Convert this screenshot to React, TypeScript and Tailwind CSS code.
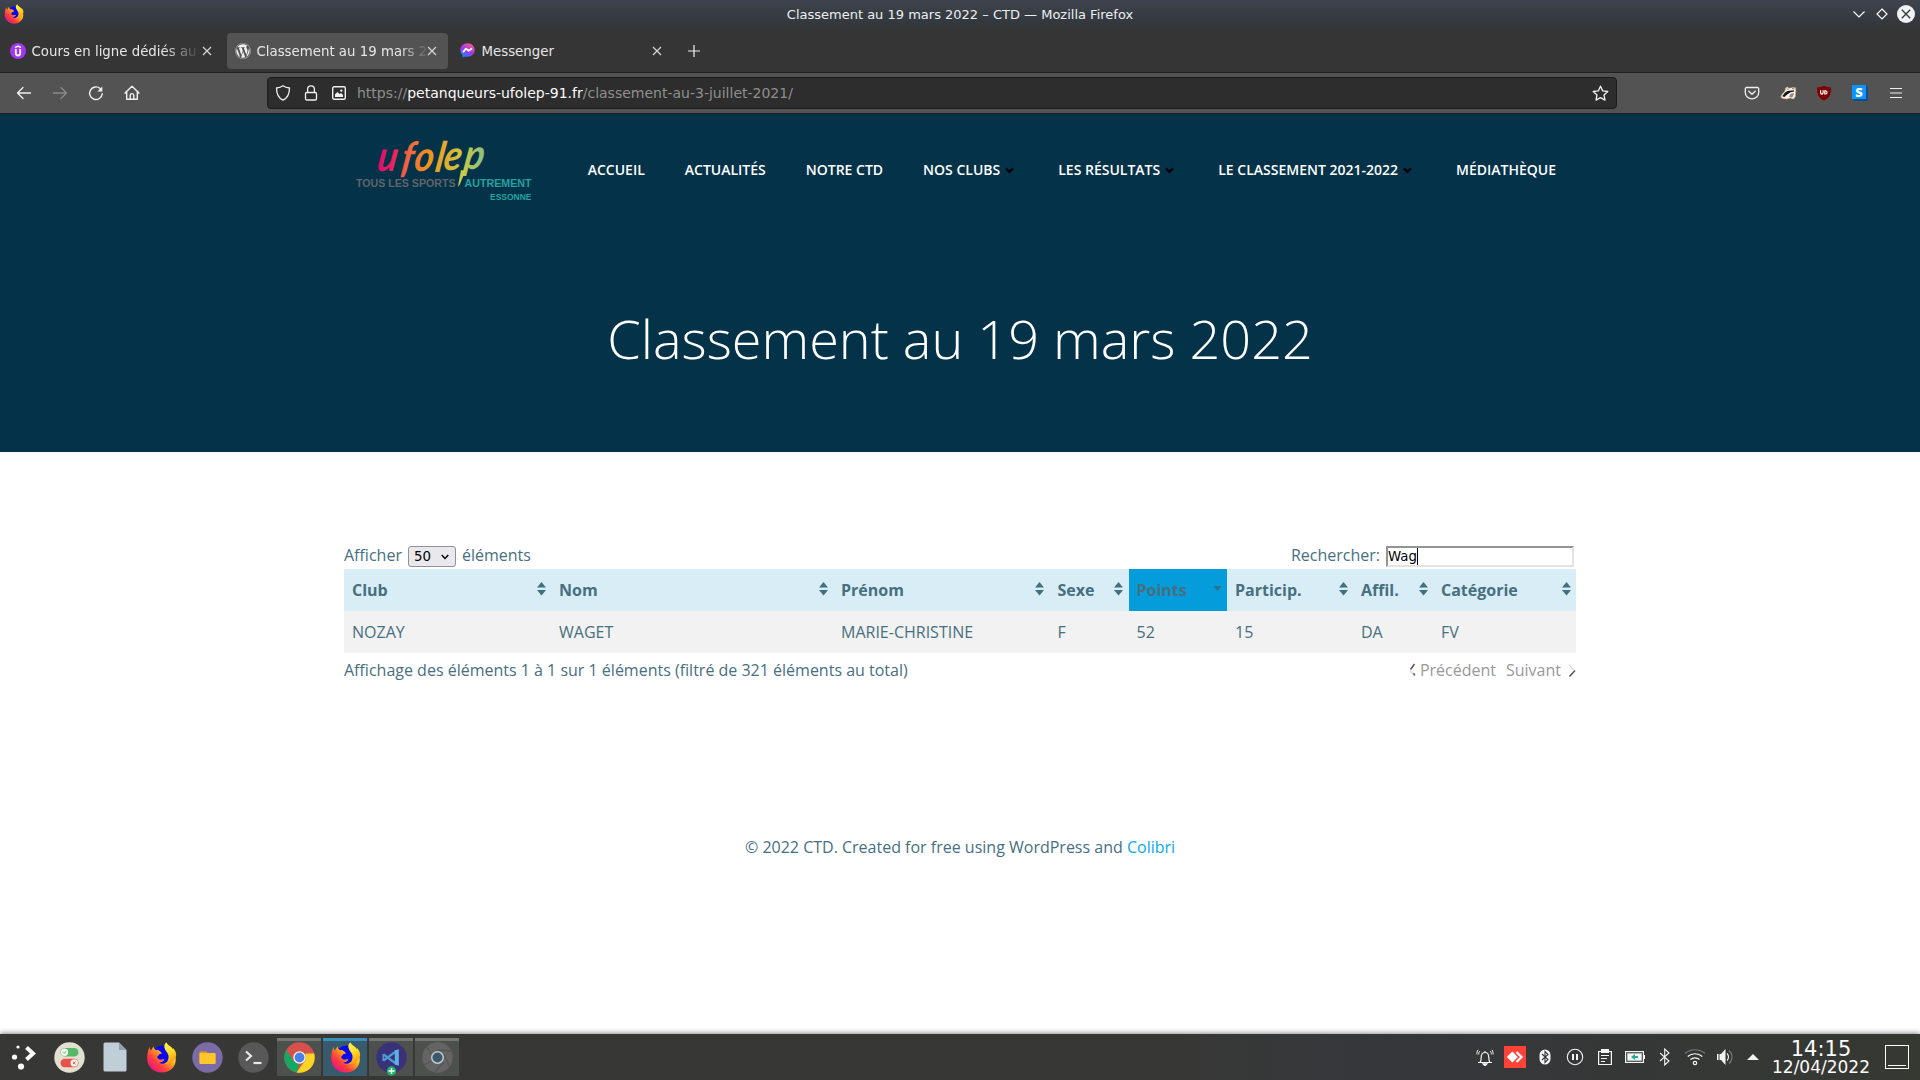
import React from "react";
import { FaWordpress } from "react-icons/fa";

function Firefox({ size, id }: { size: number; id: string }) {
  return (
    <svg width={size} height={size} viewBox="0 0 30 31" className="shrink-0">
      <defs>
        <linearGradient id={id + "a"} x1="0.85" y1="0.1" x2="0.1" y2="0.85">
          <stop offset="0.1" stopColor="#fff04a" />
          <stop offset="0.4" stopColor="#ff9a1f" />
          <stop offset="0.7" stopColor="#ff3b3f" />
          <stop offset="1" stopColor="#e3158a" />
        </linearGradient>
        <linearGradient id={id + "b"} x1="0" y1="0" x2="0.3" y2="1">
          <stop offset="0" stopColor="#fff44f" />
          <stop offset="0.5" stopColor="#ffe226" />
          <stop offset="1" stopColor="#ff9d0e" />
        </linearGradient>
      </defs>
      <circle cx="16" cy="14" r="10.5" fill="#0a08ee" />
      <path
        d="M3.2 4.5C3.2 7 3.6 7.6 4.4 8.6L7 4.2c.2 2 1.300 2.900 2.600 4 2.800-.6 5 1.600 5.800 3.400l-2 .3c-1 .2-1.200 1.600-2.400 2.200-.9 2 .6 3 2.200 3.300 2 .3 3-.8 4.800.2-.8 2.200-3.400 3-5.400 2.900 3.400 2.600 8.400.6 10-2.900 1.400-3.400.8-6-.8-8.600 3 .6 7 3 7.400 7.200C30 24.500 23.500 30.500 15.300 30.500 7 30.500.6 24.300.6 16.200.6 11.500 1.800 7.400 3.200 4.500z"
        fill={"url(#" + id + "a)"}
      />
      <path
        d="M20 .3c-2.600 2-2.600 4.500-1.400 7.300 1.400 2.800 4 4.400 3.400 8.400-.4 3-2 5-4 6 5.500.6 11.500-3.500 11.700-9.500C29.300 9.500 27.800 7 26.300 6l.2 1.600C25 4 20.800 3.500 20 .3z"
        fill={"url(#" + id + "b)"}
      />
    </svg>
  );
}

function Close() {
  return (
    <svg width="10" height="10" viewBox="0 0 10 10" fill="none" stroke="#d6d6d6" strokeWidth="1.2" className="shrink-0">
      <path d="M1 1l8 8M9 1l-8 8" />
    </svg>
  );
}

function TitleBar() {
  return (
    <div className="grid h-[28px] grid-cols-[1fr_auto_1fr] items-center bg-linear-to-b from-[#3f444e] to-[#30363a]">
      <div className="pl-[4px]">
        <Firefox size={20} id="ft" />
      </div>
      <div className="text-[13px] leading-none text-[#eceff0]">Classement au 19 mars 2022 – CTD — Mozilla Firefox</div>
      <div className="flex items-center justify-end gap-[9px] pr-[5px]">
        <svg width="14" height="14" viewBox="0 0 14 14" fill="none" stroke="#fcfcfc" strokeWidth="1.2">
          <path d="M1.500 4.500L7 10l5.500-5.500" />
        </svg>
        <svg width="14" height="14" viewBox="0 0 14 14" fill="none" stroke="#fcfcfc" strokeWidth="1.2" className="-mr-[1px]">
          <path d="M7 2l5 5-5 5-5-5z" />
        </svg>
        <svg width="18" height="18" viewBox="0 0 18 18">
          <circle cx="9" cy="9" r="9" fill="#f1f2f3" />
          <path d="M4.800 4.800l8.400 8.400M13.200 4.800l-8.400 8.400" stroke="#31363b" strokeWidth="1.300" />
        </svg>
      </div>
    </div>
  );
}

function TabBar() {
  return (
    <div className="flex h-[45px] items-center border-b border-[#202020] bg-[#353535] pt-[1px] text-[13.333px] leading-[20px] text-[#e6e6e6]">
      <div className="flex h-[36px] w-[225px] items-center pl-[10px]">
        <svg width="16" height="16" viewBox="0 0 16 16" className="shrink-0">
          <circle cx="8" cy="8" r="8" fill="#a435f0" />
          <path d="M5 4.700L8 3l3 1.700" stroke="#fff" strokeWidth="1.500" fill="none" />
          <path d="M5.800 6v4.300a2.200 2.200 0 0 0 4.400 0V6" stroke="#fff" strokeWidth="1.800" fill="none" />
        </svg>
        <div className="ml-[5.500px] w-[165px] overflow-hidden pt-[2px] whitespace-nowrap [mask-image:linear-gradient(to_right,black_80%,transparent_102%)]">Cours en ligne dédiés au</div>
        <div className="ml-[5.500px]"><Close /></div>
      </div>
      <div className="ml-[2px] flex h-[36px] w-[221px] items-center rounded-[4px] bg-[#535353] pl-[8px]">
        <FaWordpress size={16} className="shrink-0 text-[#f0f0f0]" />
        <div className="ml-[5.500px] w-[169.500px] overflow-hidden pt-[2px] whitespace-nowrap [mask-image:linear-gradient(to_right,black_84%,transparent_102%)]">Classement au 19 mars 2022</div>
        <div className="ml-[1px]"><Close /></div>
      </div>
      <div className="flex h-[36px] w-[225px] items-center pl-[12px]">
        <svg width="15" height="15" viewBox="0 0 15 15" className="shrink-0">
          <defs>
            <linearGradient id="msg" x1="0.2" y1="1" x2="0.8" y2="0">
              <stop offset="0" stopColor="#0099ff" />
              <stop offset="0.45" stopColor="#a033ff" />
              <stop offset="1" stopColor="#ff5f70" />
            </linearGradient>
          </defs>
          <path d="M7.500.2C3.400.2.300 3.200.300 7.100c0 2.100.9 3.900 2.300 5.100v2.300l2.500-1.100c.8.2 1.600.3 2.400.3 4.100 0 7.200-2.900 7.200-6.700S11.600.2 7.500.2z" fill="url(#msg)" />
          <path d="M3 9.200l3-3.600 2.600 2.200L12 5.400" stroke="#fff" strokeWidth="1.800" fill="none" strokeLinejoin="round" />
        </svg>
        <div className="ml-[6.500px] w-[165.500px] pt-[2px]">Messenger</div>
        <div className="ml-[5px]"><Close /></div>
      </div>
      <svg width="12" height="12" viewBox="0 0 12 12" className="mt-[1px] ml-[15px]" stroke="#f0f0f0" strokeWidth="1.200">
        <path d="M6 0v12M0 6h12" />
      </svg>
    </div>
  );
}

function ToolBar() {
  return (
    <div className="flex h-[41px] items-center border-b border-[#202020] bg-[#535353]">
      <div className="flex w-[267px] shrink-0 items-center gap-[20px] pl-[16px]">
        <svg width="16" height="16" viewBox="0 0 16 16" fill="none" stroke="#f0f0f0" strokeWidth="1.300" strokeLinecap="round" strokeLinejoin="round">
          <path d="M14.500 8H1.500M7 2.500L1.500 8 7 13.500" />
        </svg>
        <svg width="16" height="16" viewBox="0 0 16 16" fill="none" stroke="#8b8b8b" strokeWidth="1.300" strokeLinecap="round" strokeLinejoin="round">
          <path d="M1.500 8h13M9 2.500L14.500 8 9 13.500" />
        </svg>
        <svg width="16" height="16" viewBox="0 0 16 16" fill="none" stroke="#f0f0f0" strokeWidth="1.400" strokeLinecap="round">
          <path d="M12.200 3.600A6.300 6.300 0 1 0 14.200 8.800" />
          <path d="M14.300 1.500v5H9.300z" fill="#f0f0f0" stroke="none" />
        </svg>
        <svg width="16" height="16" viewBox="0 0 16 16" fill="none" stroke="#f0f0f0" strokeWidth="1.400" strokeLinecap="round" strokeLinejoin="round" className="-ml-[0.500px]">
          <path d="M1 8L8 1.200 15 8M2.700 6.600V14.300H13.300V6.600" />
          <path d="M6.200 14v-3.600a1.800 1.800 0 0 1 3.600 0V14" />
        </svg>
      </div>
      <div className="flex h-[32px] w-[1350px] shrink-0 items-center rounded-[4px] border border-[#1b1b1b] bg-[#2d2d2d] pl-[7px] text-[14px] text-[#8f8f8f]">
        <svg width="16" height="16" viewBox="0 0 16 16" fill="none" stroke="#f0f0f0" strokeWidth="1.300" strokeLinejoin="round">
          <path d="M8 .8c2 1.500 4.300 2 6.500 2.200 0 5.500-1.800 10-6.500 12.200C3.300 13 1.500 8.500 1.500 3 3.700 2.800 6 2.300 8 .8z" />
        </svg>
        <svg width="14" height="16" viewBox="0 0 14 16" fill="none" stroke="#f0f0f0" strokeWidth="1.300" className="ml-[13px]">
          <rect x="1.500" y="7.500" width="11" height="7.500" rx="1.300" />
          <path d="M3.600 7.500V4.300a3.400 3.400 0 0 1 6.800 0v3.200" />
        </svg>
        <svg width="14" height="14" viewBox="0 0 14 14" className="ml-[14px]">
          <rect x=".7" y=".7" width="12.600" height="12.600" rx="1.500" fill="none" stroke="#f0f0f0" strokeWidth="1.400" />
          <path d="M3 11V8.300L5.500 6l2 2 1.500-1 2 2v2z" fill="#f0f0f0" />
          <circle cx="9.300" cy="4.600" r="1.200" fill="#f0f0f0" />
        </svg>
        <div className="ml-[11px] whitespace-nowrap">
          https://<span className="text-[#fbfbfb]">petanqueurs-ufolep-91.fr</span>/classement-au-3-juillet-2021/
        </div>
        <svg width="17" height="17" viewBox="0 0 17 17" fill="none" stroke="#f0f0f0" strokeWidth="1.300" strokeLinejoin="round" className="mr-[7px] ml-auto">
          <path d="M8.500 1.200l2.200 4.700 5.100.6-3.800 3.500 1 5.100-4.500-2.500L4 15.100l1-5.100L1.200 6.500l5.100-.6z" />
        </svg>
      </div>
      <div className="flex flex-1 items-center justify-end gap-[20px] pr-[16px]">
        <svg width="16" height="16" viewBox="0 0 16 16" fill="none" stroke="#f0f0f0" strokeWidth="1.300" strokeLinecap="round" strokeLinejoin="round">
          <path d="M2.500 2.500h11a1.200 1.200 0 0 1 1.200 1.200v4a6.700 6.200 0 0 1-13.400 0v-4a1.200 1.200 0 0 1 1.200-1.200z" />
          <path d="M4.800 6.300L8 9.300l3.200-3" />
        </svg>
        <svg width="17" height="16" viewBox="0 0 17 16" className="-mr-[1px]">
          <path d="M.8 12.200L1.500 10 5 6 5.500 3 7.500 2l1.500 1.200L13 2.500l2.500.3.300 3-.5 6-2 2.200-3-1-3.500 1-4-.5z" fill="#f6f2ec" stroke="#e79a5b" strokeWidth=".8" strokeDasharray="2.500 1" />
          <path d="M2.200 11.300L5 7.500l2.500-1.500 6.500-.8v1.300l-3.500.8L6.500 10l-2 2z" fill="#161616" />
          <path d="M9 11.500l2-3 3-.3-1 3.300-2 1z" fill="#8a8a8a" />
          <path d="M6.500 3.800l2 .7M12 3.500l2.500.3" stroke="#555" strokeWidth=".7" />
        </svg>
        <svg width="16" height="16" viewBox="0 0 16 16">
          <path d="M8 .8c2 1.300 4 1.700 7 1.700 0 6-.8 10.300-7 13C1.800 12.800 1 8.500 1 2.500 4 2.500 6 2.100 8 .8z" fill="#800000" />
          <path d="M4.600 5.300v2.500a1.200 1.200 0 0 0 2.500 0V5.300M8.800 5.900h1a1.600 1.600 0 0 1 0 3.100h-1z" fill="none" stroke="#fff" strokeWidth="1.200" />
        </svg>
        <div className="-mt-[2px] flex h-[14px] w-[14px] items-center justify-center bg-[#0a94ff] font-['Open_Sans',sans-serif] text-[13px] leading-none font-extrabold text-white shadow-[1px_1px_0_#0b4f8c,2px_2px_0_#0b4f8c]">S</div>
        <svg width="12" height="12" viewBox="0 0 12 12" stroke="#f0f0f0" strokeWidth="1.200" className="mr-[2px] ml-[4px]">
          <path d="M0 1.500h12M0 6h12M0 10.500h12" />
        </svg>
      </div>
    </div>
  );
}

function Logo() {
  return (
    <svg width="180" height="70" viewBox="0 0 180 70">
      <defs>
        <linearGradient id="ufo" gradientUnits="userSpaceOnUse" x1="26" y1="0" x2="148" y2="0">
          <stop offset="0" stopColor="#d9116b" />
          <stop offset="0.12" stopColor="#ea1f60" />
          <stop offset="0.28" stopColor="#f06d3c" />
          <stop offset="0.45" stopColor="#f3901f" />
          <stop offset="0.6" stopColor="#e2ab2b" />
          <stop offset="0.78" stopColor="#c8c845" />
          <stop offset="1" stopColor="#7dc08c" />
        </linearGradient>
      </defs>
      <text transform="translate(0 34) skewX(-9) scale(0.88 1)" x="24 51 66 90 99 122" y="0 1 0 1 -1 -2" fontFamily="Lato" fontStyle="italic" fontWeight="700" fontSize="42" fill="url(#ufo)">ufolep</text>
      <path d="M106 33L110.500 34 104.500 48 102.800 50z" fill="#c3cb4c" />
      <g fontFamily="Liberation Sans" fontWeight="700">
        <text x="1" y="50" fontSize="11.500" textLength="99.500" lengthAdjust="spacingAndGlyphs" fill="#626468">TOUS LES SPORTS</text>
        <text x="109.500" y="50" fontSize="11.500" textLength="67" lengthAdjust="spacingAndGlyphs" fill="#22a3a0">AUTREMENT</text>
        <text x="135" y="63" fontSize="9" textLength="41.500" lengthAdjust="spacingAndGlyphs" fill="#22a3a0">ESSONNE</text>
      </g>
    </svg>
  );
}

const nav = [
  { label: "ACCUEIL", menu: false },
  { label: "ACTUALITÉS", menu: false },
  { label: "NOTRE CTD", menu: false },
  { label: "NOS CLUBS", menu: true },
  { label: "LES RÉSULTATS", menu: true },
  { label: "LE CLASSEMENT 2021-2022", menu: true },
  { label: "MÉDIATHÈQUE", menu: false },
];

function Hero() {
  return (
    <header className="h-[338px] bg-[#033249] font-['Open_Sans',sans-serif] text-white">
      <div className="mx-auto flex h-[112px] w-[1232px] items-center justify-between pr-[20px] pl-[11px]">
        <div className="mt-[4px]"><Logo /></div>
        <nav className="flex gap-[40px] text-[14px] leading-none font-semibold whitespace-nowrap">
          {nav.map((n) => (
            <a key={n.label} className="flex items-center">
              {n.label}
              {n.menu && (
                <svg width="9" height="7" viewBox="0 0 9 7" className="mr-[4px] ml-[5px]" fill="none" stroke="#00060a" strokeWidth="2.400">
                  <path d="M1 1.300l3.500 3.500L8 1.300" />
                </svg>
              )}
            </a>
          ))}
        </nav>
      </div>
      <h1 className="mt-[76px] text-center text-[54px] leading-[72px] font-light">Classement au 19 mars 2022</h1>
    </header>
  );
}

const columns = [
  { head: "Club", value: "NOZAY" },
  { head: "Nom", value: "WAGET" },
  { head: "Prénom", value: "MARIE-CHRISTINE" },
  { head: "Sexe", value: "F" },
  { head: "Points", value: "52" },
  { head: "Particip.", value: "15" },
  { head: "Affil.", value: "DA" },
  { head: "Catégorie", value: "FV" },
];

function Sort({ active }: { active: boolean }) {
  return (
    <svg width="9" height="14" viewBox="0 0 9 14" fill={active ? "#2f6f8b" : "#3f7082"} className="mt-[-3px]">
      {!active && <path d="M4.500 0L9 5.500H0z" />}
      <path d={active ? "M4.500 9L8.500 4H.5z" : "M4.500 13.500L9 8H0z"} />
    </svg>
  );
}

function Content() {
  return (
    <main className="h-[582px] bg-white pt-[92px] font-['Open_Sans',sans-serif] text-[16px] leading-[24px] text-[#46707f]">
      <div className="mx-auto w-[1232px]">
        <div className="flex h-[25px] items-center justify-between pr-[2px]">
          <label className="flex items-center">
            <span className="-mt-[3px]">Afficher</span>
            <span className="mr-[6px] ml-[6px] flex h-[21px] w-[48px] items-center rounded-[3px] border border-[#8f8f9d] bg-[#e9e9ed] pt-[1px] pl-[5px] font-['DejaVu_Sans',sans-serif] text-[13.333px] text-black">
              50
              <svg width="8" height="6" viewBox="0 0 8 6" fill="none" stroke="#000" strokeWidth="1.400" className="ml-[10px]">
                <path d="M.7 1L4 4.500 7.300 1" />
              </svg>
            </span>
            <span className="-mt-[3px]">éléments</span>
          </label>
          <label className="flex items-center">
            <span className="-mt-[3px]">Rechercher:</span>
            <span className="ml-[6px] flex h-[21px] w-[188px] items-center border-2 border-t-[#949494] border-r-[#e3e3e3] border-b-[#e3e3e3] border-l-[#949494] bg-white font-['DejaVu_Sans',sans-serif] text-[13.333px] text-black">
              Wag<span className="h-[17px] w-px bg-black" />
            </span>
          </label>
        </div>
        <div className="grid grid-cols-[207px_282px_216.500px_79px_98.500px_126px_80px_143px]">
          {columns.map((c) => (
            <div key={c.head} className={"flex h-[42px] items-center justify-between pr-[5.500px] pl-[8px] font-bold " + (c.head === "Points" ? "bg-[#049cdb]" : "bg-[#d9edf7]")}>
              <span>{c.head}</span>
              <Sort active={c.head === "Points"} />
            </div>
          ))}
          {columns.map((c) => (
            <div key={c.value} className="flex h-[42px] items-center bg-[#f2f2f2] pl-[8px]">{c.value}</div>
          ))}
        </div>
        <div className="mt-[5px] flex items-center justify-between">
          <span>Affichage des éléments 1 à 1 sur 1 éléments (filtré de 321 éléments au total)</span>
          <span className="flex items-center text-[#999]">
            <svg width="9" height="15" viewBox="0 0 9 15" fill="none" strokeWidth="1.500" className="mr-[3px]">
              <path d="M6.500 1L2.500 6.500" stroke="#555" />
              <path d="M2 7l4 6" stroke="#ddd" />
              <path d="M5.500 10l1.500 2.500" stroke="#777" />
            </svg>
            Précédent
            <span className="ml-[10px]">Suivant</span>
            <svg width="9" height="15" viewBox="0 0 9 15" fill="none" strokeWidth="1.500" className="ml-[6px]">
              <path d="M2 1.500L6.500 7" stroke="#ddd" />
              <path d="M8 7.500L2.500 13.500" stroke="#555" />
            </svg>
          </span>
        </div>
      </div>
      <footer className="mt-[153px] text-center">
        © 2022 CTD. Created for free using WordPress and <a className="text-[#03a9f4]">Colibri</a>
      </footer>
    </main>
  );
}

function Task({ tone, children }: { tone?: "idle" | "active"; children: React.ReactNode }) {
  const style =
    tone === "active"
      ? "border-t-[3px] border-[#3a8fbb] bg-[#375a6d]"
      : tone === "idle"
        ? "border-t-[3px] border-[#747674] bg-[#4d514d]"
        : "border-t-[3px] border-transparent";
  return <div className={"flex h-[38px] w-[44px] items-center justify-center pb-[3px] " + style}>{children}</div>;
}

function TaskBar() {
  return (
    <div className="relative z-10 flex h-[46px] items-center justify-between bg-linear-to-r from-[#373835] from-60% via-[#35373b] via-72% to-[#363832] shadow-[0_-1px_5px_rgba(0,0,0,0.45)]">
      <div className="flex gap-[2px] pl-[1px]">
        <Task>
          <svg width="26" height="26" viewBox="0 0 26 26" fill="#fcfcfc">
            <circle cx="8" cy="3" r="1.600" />
            <circle cx="4.500" cy="13" r="2.600" />
            <circle cx="11" cy="22.500" r="3.100" />
            <path d="M16.500 3.500L23 9.500 16.500 15.500" fill="none" stroke="#fcfcfc" strokeWidth="4" />
          </svg>
        </Task>
        <Task>
          <svg width="31" height="31" viewBox="0 0 31 31">
            <circle cx="15.500" cy="15.500" r="15.200" fill="#e3dfd1" />
            <rect x="6.500" y="6" width="18" height="8.500" rx="4.250" fill="#56b968" />
            <circle cx="10.500" cy="10.200" r="3.700" fill="#f5f5ee" />
            <path d="M9 10.300l1.200 1.200 2-2.300" stroke="#56b968" fill="none" />
            <rect x="6.500" y="16.700" width="18" height="8.500" rx="4.250" fill="#ea4f48" />
            <circle cx="20.200" cy="20.900" r="3.700" fill="#f5f5ee" />
            <path d="M18.900 19.600l2.600 2.600M21.500 19.600l-2.600 2.600" stroke="#ea4f48" />
          </svg>
        </Task>
        <Task>
          <svg width="24" height="30" viewBox="0 0 24 30">
            <path d="M2 .5h14l7.500 7.500v20a1.500 1.500 0 0 1-1.500 1.500H2A1.500 1.500 0 0 1 .5 28V2A1.500 1.500 0 0 1 2 .5z" fill="#c0ced8" />
            <path d="M16 .5V8h7.500z" fill="#90a2af" />
          </svg>
        </Task>
        <Task><Firefox size={31} id="fa" /></Task>
        <Task>
          <svg width="31" height="31" viewBox="0 0 31 31">
            <circle cx="15.500" cy="15.500" r="15.200" fill="#7b6ba6" />
            <path d="M7.500 9.500h7l1.500 2h7.500v10h-16z" fill="#f29a16" />
            <rect x="7.500" y="11" width="16" height="11" rx="1" fill="#ffc62b" />
          </svg>
        </Task>
        <Task>
          <svg width="31" height="31" viewBox="0 0 31 31">
            <circle cx="15.500" cy="15.500" r="15.200" fill="#585858" />
            <path d="M8 9.500l5 4.500-5 4.500" fill="none" stroke="#e8e8e8" strokeWidth="2.200" />
            <path d="M15.500 21h8" stroke="#e8e8e8" strokeWidth="2.200" />
          </svg>
        </Task>
        <Task tone="idle">
          <svg width="31" height="31" viewBox="0 0 31 31">
            <circle cx="15.500" cy="15.500" r="15.200" fill="#d8504b" />
            <path d="M2.300 7.900L9.500 19l6 3.500-3 7.900A15.200 15.200 0 0 1 2.300 7.900z" fill="#15a863" />
            <path d="M30.200 11.500A15.200 15.200 0 0 1 12.500 30.400L21.500 18V11.500z" fill="#f9d524" />
            <circle cx="15.500" cy="15.500" r="6.200" fill="#f5f5f5" />
            <circle cx="15.500" cy="15.500" r="4.900" fill="#4a80e8" />
          </svg>
        </Task>
        <Task tone="active"><Firefox size={31} id="fb" /></Task>
        <Task tone="idle">
          <svg width="31" height="35" viewBox="0 0 31 35" className="-mb-[4px]">
            <circle cx="15.500" cy="15.500" r="15.200" fill="#3a3278" />
            <path d="M20.500 9L7.500 18.500M7.500 12.500L20.500 22" stroke="#4f9ad8" strokeWidth="2.200" />
            <path d="M7.200 12v7" stroke="#4f9ad8" strokeWidth="1.500" />
            <path d="M18.800 8.500L22.800 7.200v16.600l-4-1.300z" fill="#62b0ea" />
            <circle cx="15.500" cy="29" r="4.700" fill="#1db468" />
            <path d="M15.500 26v6M12.500 29h6" stroke="#fff" strokeWidth="1.400" />
          </svg>
        </Task>
        <Task tone="idle">
          <svg width="31" height="31" viewBox="0 0 31 31">
            <circle cx="15.500" cy="15.500" r="15.200" fill="#646464" />
            <path d="M15.500 8L29 9M22 12l5.500 13M22 20l-9 10M9 19L2 23M9 12L5 5" stroke="#565656" strokeWidth="1.300" />
            <circle cx="15.500" cy="15.500" r="6.500" fill="#c3cdd1" />
            <circle cx="15.500" cy="15.500" r="5" fill="#3a5a6c" />
          </svg>
        </Task>
      </div>
      <div className="flex items-center pr-[11px]">
        <svg width="18" height="17" viewBox="0 0 18 17" fill="none" stroke="#f4f4f4" strokeWidth="1.200">
          <path d="M2 13.500h14M4 13.500c1.200-1.500 1.200-3 1.200-5 0-3.200 1.300-5 3.800-5s3.800 1.800 3.800 5c0 2 0 3.500 1.200 5M9 3.500V2" />
          <path d="M7 14.800h4L9 16.900z" fill="#f4f4f4" />
          <path d="M4 2C3 3 2.700 4 2.700 5.500M2 .8C1 2.300.8 4 1 5.500M14 2c1 1 1.300 2 1.300 3.500M16 .8c1 1.500 1.200 3.200 1 4.700" strokeWidth="1" />
        </svg>
        <svg width="22" height="22" viewBox="0 0 22 22" className="ml-[10px]">
          <rect width="22" height="22" fill="#fe4237" />
          <path d="M8.300 5.500l5.500 5.500-5.500 5.500L2.800 11z" fill="#fff" />
          <path d="M12.500 6l5 5-5 5" fill="none" stroke="#fff" strokeWidth="2.200" />
        </svg>
        <svg width="12" height="16" viewBox="0 0 12 16" className="ml-[13px]">
          <rect x=".5" y=".5" width="11" height="15" rx="5.500" fill="#f4f4f4" />
          <path d="M3 5l6 5.500-3 3v-11l3 3L3 11" fill="none" stroke="#35373b" strokeWidth="1.100" />
        </svg>
        <svg width="18" height="18" viewBox="0 0 18 18" className="ml-[15px]" fill="none" stroke="#f4f4f4">
          <circle cx="9" cy="9" r="7.700" strokeWidth="1.100" />
          <path d="M7 6v6M11 6v6" strokeWidth="2" />
        </svg>
        <svg width="14" height="16" viewBox="0 0 14 16" className="ml-[14px]">
          <path d="M.6 2.500h12.800v13H.6z" fill="none" stroke="#f4f4f4" strokeWidth="1.200" />
          <path d="M3 0h8v4H3z" fill="#f4f4f4" />
          <path d="M3 6.500h8M3 9.500h6M3 12.500h4" stroke="#f4f4f4" />
        </svg>
        <svg width="20" height="12" viewBox="0 0 20 12" className="ml-[13px]">
          <rect x=".6" y=".6" width="17.800" height="10.800" fill="none" stroke="#f4f4f4" strokeWidth="1.200" />
          <rect x="2.300" y="2.300" width="14.400" height="7.400" fill="#f4f4f4" />
          <path d="M19.500 4v4" stroke="#f4f4f4" />
          <path d="M6 6l4-3v2h3v2h-3v2z" fill="#1fae92" />
        </svg>
        <svg width="12" height="18" viewBox="0 0 12 18" className="ml-[14px]" fill="none" stroke="#f4f4f4" strokeWidth="1.100">
          <path d="M1 5l9 8-4.300 4V1L10 5l-9 8" />
        </svg>
        <svg width="22" height="18" viewBox="0 0 22 18" className="ml-[13px]" fill="none" stroke="#f4f4f4" strokeWidth="1.200">
          <path d="M1 5.500C6.500.5 15.500.5 21 5.500" stroke="#77797b" />
          <path d="M3.700 8.500c4-3.700 10.600-3.700 14.600 0" />
          <path d="M6.500 11.500c2.500-2.300 6.500-2.300 9 0" />
          <circle cx="11" cy="15" r="1.700" />
        </svg>
        <svg width="18" height="18" viewBox="0 0 18 18" className="ml-[10px]">
          <path d="M1 6h1.500v6H1zM3.500 6H5l4.500-5v16L5 12H3.500z" fill="#f4f4f4" />
          <path d="M11 5.500c2 2 2 5 0 7" stroke="#f4f4f4" fill="none" strokeWidth="1.100" />
          <path d="M13 2.500c4 3.500 4 9.500 0 13" stroke="#77797b" fill="none" strokeWidth="1.100" />
        </svg>
        <svg width="12" height="6" viewBox="0 0 12 6" className="ml-[13px]">
          <path d="M6 0l6 6H0z" fill="#f4f4f4" />
        </svg>
        <div className="ml-[13px] w-[98px] text-center text-[#fcfcfc]">
          <div className="text-[21px] leading-[20px]">14:15</div>
          <div className="text-[17px] leading-[17px]">12/04/2022</div>
        </div>
        <div className="ml-[15px] flex h-[24px] w-[24px] items-end justify-center border border-[#fcfcfc] pb-[2px]">
          <div className="h-px w-[18px] bg-[#fcfcfc]" />
        </div>
      </div>
    </div>
  );
}

export default function App() {
  return (
    <div className="h-[1080px] w-[1920px] overflow-hidden bg-white font-['DejaVu_Sans',sans-serif]">
      <TitleBar />
      <TabBar />
      <ToolBar />
      <Hero />
      <Content />
      <TaskBar />
    </div>
  );
}
